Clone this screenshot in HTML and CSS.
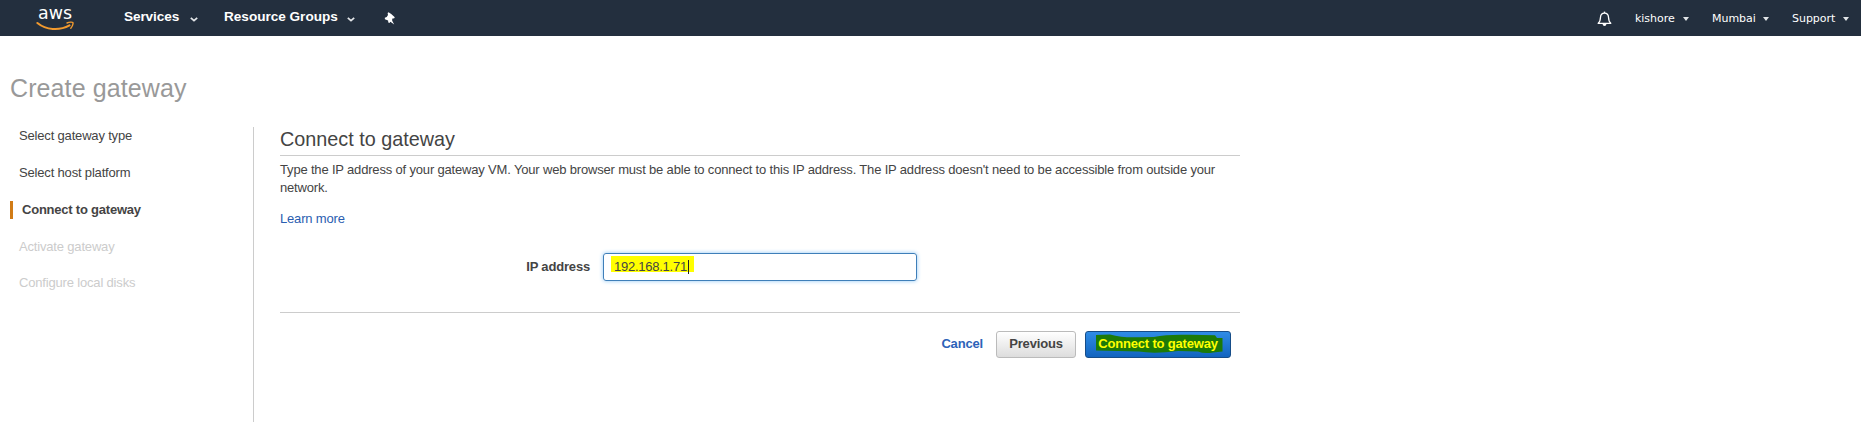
FILE: index.html
```html
<!DOCTYPE html>
<html lang="en">
<head>
<meta charset="utf-8">
<title>Create gateway</title>
<link rel="stylesheet" href="styles.css">
</head>
<body>
<header class="navbar">
  <svg class="logo" width="40" height="31" viewBox="0 -5 40 31">
    <text class="logo-text" x="2" y="13.3" textLength="34" lengthAdjust="spacingAndGlyphs">aws</text>
    <path d="M1.4 17C10 24 23 25.2 33.5 19.4" fill="none" stroke="#f29a2e" stroke-width="2" stroke-linecap="round"/>
    <path d="M31 17C33.5 15.8 36.4 16 36.9 16.5C37.4 17.5 36.4 20.6 34.8 22.2" fill="none" stroke="#f29a2e" stroke-width="1.4" stroke-linecap="round"/>
  </svg>
  <nav class="menu">
    <a class="services">Services</a>
    <svg class="chevron" width="8" height="5" viewBox="0 0 8 5"><path d="M.8 .8 4 3.7 7.2 .8"/></svg>
    <a class="groups">Resource Groups</a>
    <svg class="chevron" width="8" height="5" viewBox="0 0 8 5"><path d="M.8 .8 4 3.7 7.2 .8"/></svg>
    <svg class="pin" width="12" height="13" viewBox="0 0 12 13"><path d="M4.6.2 7.2 2.1 10.8 5.2 10 6.6 8.7 6.3 8.1 7.8 8.3 9 10.2 12.4 6.4 9.7 5.4 11 4.3 10.6 4.1 8.4.9 7.2.8 5.8 2.7 4.9 4 3 3.6 1Z" fill="#fff"/></svg>
  </nav>
  <div class="account">
    <svg class="bell" width="15" height="16" viewBox="0 0 15 16"><path d="M1.2 12.3H13.8C11.9 10.8 11.6 9.5 11.5 6.3C11.4 3.7 9.9 2.1 7.5 2.1S3.6 3.7 3.5 6.3C3.4 9.5 3.1 10.8 1.2 12.3Z" fill="none" stroke="#fff" stroke-width="1.3" stroke-linejoin="round"/><path d="M7.5.6V2" stroke="#fff" stroke-width="1.4"/><path d="M5.5 12.7H9.5Q9.2 15 7.5 15T5.5 12.7Z" fill="#fff"/></svg>
    <a class="user">kishore</a><i class="caret"></i>
    <a class="region">Mumbai</a><i class="caret"></i>
    <a class="support">Support</a><i class="caret"></i>
  </div>
</header>
<h1 class="title">Create gateway</h1>
<div class="layout">
  <ol class="steps">
    <li>Select gateway type</li>
    <li>Select host platform</li>
    <li class="current">Connect to gateway</li>
    <li class="pending">Activate gateway</li>
    <li class="pending last">Configure local disks</li>
  </ol>
  <main class="panel">
    <h2 class="heading"><span>Connect to gateway</span></h2>
    <p class="intro"><span class="line">Type the IP address of your gateway VM. Your web browser must be able to connect to this IP address. The IP address doesn't need to be accessible from outside your</span> <span>network.</span></p>
    <a class="learn">Learn more</a>
    <div class="field">
      <label class="label">IP address</label>
      <div class="input"><span class="value">192.168.1.71<i class="cursor"></i></span></div>
    </div>
    <footer class="actions">
      <a class="cancel">Cancel</a>
      <button class="button">Previous</button>
      <button class="button primary">
        <svg class="marker" width="127" height="20" viewBox="0 0 127 20"><path d="M0 1L14 .5Q27 4 43 3.2L58 3Q72 0 94 .8L119 1.2L121 4L126.5 4L126.5 17.5L117 18.5Q108 20 102 17.5L82 17Q58 20 43 17.5L22 17L0 16.5Z" fill="#1c7a08"/></svg>
        <span>Connect to gateway</span>
      </button>
    </footer>
  </main>
</div>
</body>
</html>
```
FILE: styles.css
```css
* { box-sizing: border-box; }
body {
  margin: 0;
  height: 422px;
  overflow: hidden;
  background: #fff;
  color: #444;
  font: 13px/18px "Liberation Sans", Arial, sans-serif;
  letter-spacing: -.174px;
}
.navbar {
  display: flex;
  height: 36px;
  background: #232f3e;
  color: #fff;
}
.logo { margin: 1px 0 0 36px; flex: none; }
.logo-text { font: 18px "DejaVu Sans", sans-serif; letter-spacing: 0; fill: #fff; }
.menu {
  display: flex;
  align-items: flex-start;
  padding-top: 8px;
  margin-left: 48px;
  font-size: 13.6px;
  font-weight: bold;
  white-space: nowrap;
}
.services { width: 66px; letter-spacing: -.1px; }
.groups { width: 123px; margin-left: 26px; letter-spacing: -.02px; }
.chevron { margin-top: 9px; fill: none; stroke: #e2e5e8; stroke-width: 1.7; }
.pin { margin: 4px 0 0 29px; }
.account {
  display: flex;
  align-items: flex-start;
  margin-left: auto;
  padding: 10px 12px 0 0;
  font: 11px/18px "DejaVu Sans", Verdana, sans-serif;
  letter-spacing: -.03px;
  white-space: nowrap;
}
.bell { margin: 1px 23px 0 0; }
.user { width: 48px; }
.region { width: 51px; margin-left: 23px; }
.support { width: 51px; margin-left: 23px; }
.caret {
  margin-top: 7px;
  border: 3px solid transparent;
  border-top: 4px solid #e2e5e8;
  border-bottom: 0;
}
.title {
  margin: 36px 0 0 10px;
  color: #999;
  font-size: 25px;
  font-weight: normal;
  letter-spacing: .1px;
  line-height: 32px;
}
.layout { display: flex; margin-top: 23px; height: 295px; }
.steps {
  width: 244px;
  margin: 0 0 0 10px;
  padding: 0;
  list-style: none;
  border-right: 1px solid #ccc;
}
.steps li { height: 18px; margin-bottom: 19px; padding-left: 9px; }
.steps .current { border-left: 3px solid #d17b16; font-weight: bold; letter-spacing: -.22px; }
.steps .pending { color: #ccc; margin-bottom: 18px; }
.panel { width: 960px; margin-left: 26px; }
.heading {
  height: 29px;
  margin: 0;
  border-bottom: 1px solid #ccc;
  font-size: 19.8px;
  font-weight: normal;
  letter-spacing: 0;
  line-height: 24px;
}
.intro { margin: 5px 0 13px; }
.line { display: block; white-space: nowrap; }
.learn { display: block; color: #2a5db0; }
.field { display: flex; height: 28px; margin-top: 25px; }
.label { width: 311px; padding: 5px 1px 0 0; text-align: right; font-weight: bold; }
.input {
  width: 314px;
  margin-left: 12px;
  padding: 2px 7px;
  border: 1px solid #3f7fb9;
  border-radius: 3px;
  box-shadow: 0 0 4px #8fc8f5;
}
.value {
  display: flex;
  width: 83px;
  height: 16px;
  padding-left: 3px;
  letter-spacing: -.25px;
  line-height: 21px;
  background: #ff0;
}
.cursor { width: 1px; height: 14px; margin: 4px 0 0 1px; background: #222; }
.actions {
  display: flex;
  margin-top: 31px;
  padding: 18px 9px 0 0;
  border-top: 1px solid #ccc;
  justify-content: flex-end;
  font-weight: bold;
}
.cancel { margin: 4px 13px 0 0; color: #2d62b8; }
.button {
  width: 80px;
  height: 27px;
  padding: 0 0 1px;
  border: 1px solid #bbb;
  border-radius: 3px;
  color: #444;
  background: linear-gradient(#fff, #ddd);
  font: bold 13px/18px "Liberation Sans", Arial, sans-serif;
  letter-spacing: -.18px;
  white-space: nowrap;
}
.primary {
  display: grid;
  place-items: center;
  width: 146px;
  margin-left: 9px;
  border-color: #164d89;
  color: #ff0;
  background: linear-gradient(#2f8ce6, #1264bf);
}
.primary > * { grid-area: 1 / 1; }
.marker { margin-left: 2px; }
```
